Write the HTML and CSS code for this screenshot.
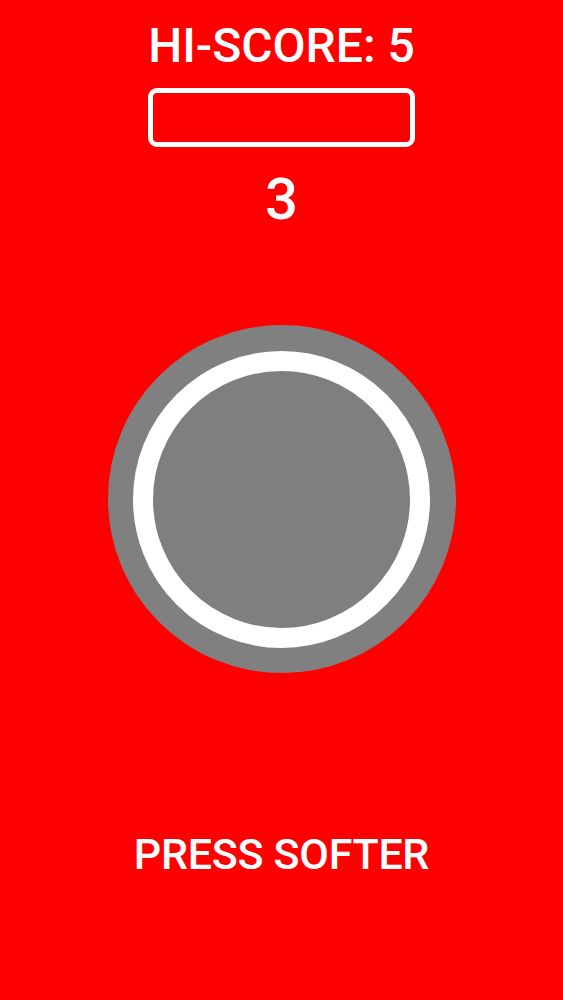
FILE: index.html
```html
<!DOCTYPE html>
<html>
<head>
<meta charset="utf-8">
<link rel="stylesheet" href="styles.css">
</head>
<body>
<main class="screen">
  <header class="top">
    <div class="hiscore">HI-SCORE: 5</div>
    <div class="bar"></div>
    <div class="count">3</div>
  </header>
  <section class="stage">
    <div class="button-outer">
      <div class="button-ring">
        <div class="button-core"></div>
      </div>
    </div>
  </section>
  <footer class="hint">PRESS SOFTER</footer>
</main>
</body>
</html>
```
FILE: styles.css
```css
html, body {
  margin: 0;
  padding: 0;
  background: #ff0000;
}
.screen {
  width: 563px;
  height: 1000px;
  display: flex;
  flex-direction: column;
  align-items: center;
  font-family: Roboto, "Liberation Sans", sans-serif;
  font-weight: 500;
  color: #ffffff;
  overflow: hidden;
}
.top {
  display: flex;
  flex-direction: column;
  align-items: center;
  padding-top: 20px;
}
.hiscore {
  font-size: 48px;
  line-height: 52px;
  letter-spacing: 0;
}
.bar {
  margin-top: 16px;
  width: 257px;
  height: 49px;
  border: 5px solid #fff;
  border-radius: 9px;
  box-sizing: content-box;
}
.count {
  margin-top: 22px;
  font-size: 58px;
  line-height: 60px;
}
.stage {
  margin-top: 96px;
  display: flex;
  justify-content: center;
}
.button-outer {
  width: 348px;
  height: 348px;
  border-radius: 50%;
  background: #808080;
  display: flex;
  align-items: center;
  justify-content: center;
}
.button-ring {
  width: 257px;
  height: 257px;
  border: 20px solid #ffffff;
  border-radius: 50%;
  background: #7f7f80;
}
.hint {
  margin-top: 156px;
  font-size: 43px;
  line-height: 50px;
  letter-spacing: -0.3px;
}
```
